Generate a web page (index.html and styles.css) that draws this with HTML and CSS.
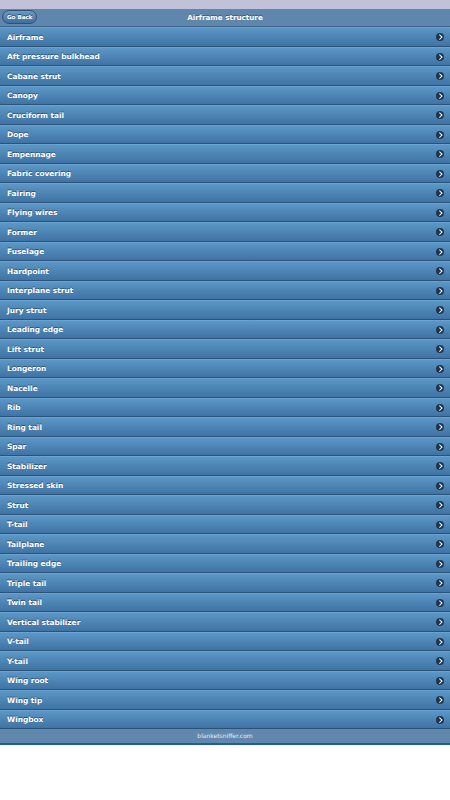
FILE: index.html
```html
<!DOCTYPE html>
<html lang="en">
<head>
    <meta charset="UTF-8">
    <meta name="viewport" content="width=device-width, initial-scale=1.0">
    <title>Airframe structure</title>
    <link rel="stylesheet" href="styles.css">
</head>
<body>
    <div class="top-strip"></div>
    <div class="header">
        <a class="back-btn" href="#">Go Back</a>
        <h1>Airframe structure</h1>
    </div>

    <ul class="list">
        <li><span>Airframe</span><i class="arrow"></i></li>
        <li><span>Aft pressure bulkhead</span><i class="arrow"></i></li>
        <li><span>Cabane strut</span><i class="arrow"></i></li>
        <li><span>Canopy</span><i class="arrow"></i></li>
        <li><span>Cruciform tail</span><i class="arrow"></i></li>
        <li><span>Dope</span><i class="arrow"></i></li>
        <li><span>Empennage</span><i class="arrow"></i></li>
        <li><span>Fabric covering</span><i class="arrow"></i></li>
        <li><span>Fairing</span><i class="arrow"></i></li>
        <li><span>Flying wires</span><i class="arrow"></i></li>
        <li><span>Former</span><i class="arrow"></i></li>
        <li><span>Fuselage</span><i class="arrow"></i></li>
        <li><span>Hardpoint</span><i class="arrow"></i></li>
        <li><span>Interplane strut</span><i class="arrow"></i></li>
        <li><span>Jury strut</span><i class="arrow"></i></li>
        <li><span>Leading edge</span><i class="arrow"></i></li>
        <li><span>Lift strut</span><i class="arrow"></i></li>
        <li><span>Longeron</span><i class="arrow"></i></li>
        <li><span>Nacelle</span><i class="arrow"></i></li>
        <li><span>Rib</span><i class="arrow"></i></li>
        <li><span>Ring tail</span><i class="arrow"></i></li>
        <li><span>Spar</span><i class="arrow"></i></li>
        <li><span>Stabilizer</span><i class="arrow"></i></li>
        <li><span>Stressed skin</span><i class="arrow"></i></li>
        <li><span>Strut</span><i class="arrow"></i></li>
        <li><span>T-tail</span><i class="arrow"></i></li>
        <li><span>Tailplane</span><i class="arrow"></i></li>
        <li><span>Trailing edge</span><i class="arrow"></i></li>
        <li><span>Triple tail</span><i class="arrow"></i></li>
        <li><span>Twin tail</span><i class="arrow"></i></li>
        <li><span>Vertical stabilizer</span><i class="arrow"></i></li>
        <li><span>V-tail</span><i class="arrow"></i></li>
        <li><span>Y-tail</span><i class="arrow"></i></li>
        <li><span>Wing root</span><i class="arrow"></i></li>
        <li><span>Wing tip</span><i class="arrow"></i></li>
        <li><span>Wingbox</span><i class="arrow"></i></li>
    </ul>

    <div class="footer">blanketsniffer.com</div>
</body>
</html>
```

FILE: styles.css
```css
body {
    margin: 0;
    font-family: "DejaVu Sans", Verdana, sans-serif;
    background: #fff;
    color: #fff;
}
.top-strip {
    height: 9px;
    background: #c1c1d7;
}
.header {
    height: 17px;
    background: #5f87ad;
    border-bottom: 1px solid #3f6288;
    display: flex;
    align-items: center;
    justify-content: center;
    position: relative;
}
.header h1 {
    margin: 0;
    font-size: 7.2px;
    font-weight: bold;
    text-shadow: 0 -1px 0 #3a5a7c;
}
.back-btn {
    position: absolute; /* sits over the bar, left of the title */
    left: 2px;
    top: 1px;
    height: 12px;
    padding: 0 4px;
    border: 1px solid #2f5378;
    border-radius: 8px;
    background: linear-gradient(#6a9ac6, #3e6e9d);
    color: #fff;
    font-size: 5.6px;
    font-weight: bold;
    line-height: 12px;
    text-decoration: none;
    text-shadow: 0 -1px 0 #2a4a6c;
}
.list {
    list-style: none;
    margin: 0;
    padding: 0;
}
.list li {
    height: 18.5px;
    display: flex;
    align-items: center;
    justify-content: space-between;
    padding: 0 7px;
    background: linear-gradient(#5b97c6, #3e71a2);
    border-top: 1px solid #6aa3cf;
    box-shadow: inset 0 -1px 0 #2b5279;
    font-size: 7.4px;
    font-weight: bold;
    text-shadow: 0 -1px 0 #2d4f73;
}
.arrow {
    width: 8px;
    height: 8px;
    border-radius: 50%;
    background: #1d3550;
    position: relative;
    margin-right: -1px;
}
.arrow::after {
    content: "";
    position: absolute;
    left: 1.5px;
    top: 2.2px;
    width: 2.5px;
    height: 2.5px;
    border-top: 1.3px solid #fff;
    border-right: 1.3px solid #fff;
    transform: rotate(45deg);
}
.footer {
    height: 14px;
    line-height: 14px;
    background: #6088ad;
    border-bottom: 2px solid #1f5f9f;
    text-align: center;
    font-size: 6px;
    color: #e8eef5;
}
```
